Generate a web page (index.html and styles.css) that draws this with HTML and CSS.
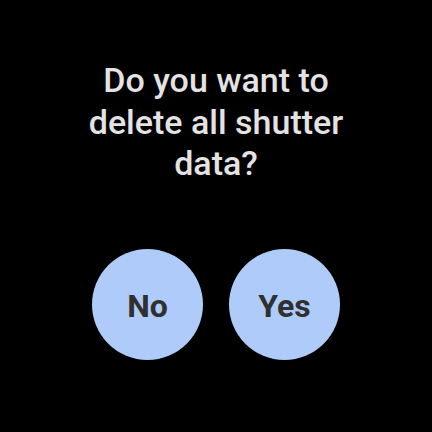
FILE: index.html
```html
<!DOCTYPE html>
<html>
<head>
<meta charset="utf-8">
<link rel="stylesheet" href="styles.css">
</head>
<body>
<div class="screen">
  <p class="title">Do you want to<br>delete all shutter<br>data?</p>
  <div class="actions">
    <button class="btn">No</button>
    <button class="btn">Yes</button>
  </div>
</div>
</body>
</html>
```
FILE: styles.css
```css
html, body {
  margin: 0;
  padding: 0;
  background: #000;
}
.screen {
  width: 432px;
  height: 432px;
  display: flex;
  flex-direction: column;
  align-items: center;
  font-family: Roboto, "Noto Sans", sans-serif;
}
.title {
  margin: 60px 0 0;
  color: #e3e3e3;
  font-size: 34px;
  line-height: 41.5px;
  text-align: center;
  font-weight: 500;
  white-space: nowrap;
}
.actions {
  margin-top: 64px;
  display: flex;
  gap: 26px;
}
.btn {
  width: 111px;
  height: 111px;
  border-radius: 50%;
  border: none;
  padding: 3px 0 0;
  background: #aecbfa;
  color: #303030;
  font-family: Roboto, "Noto Sans", sans-serif;
  font-size: 32px;
  font-weight: 700;
}
```
